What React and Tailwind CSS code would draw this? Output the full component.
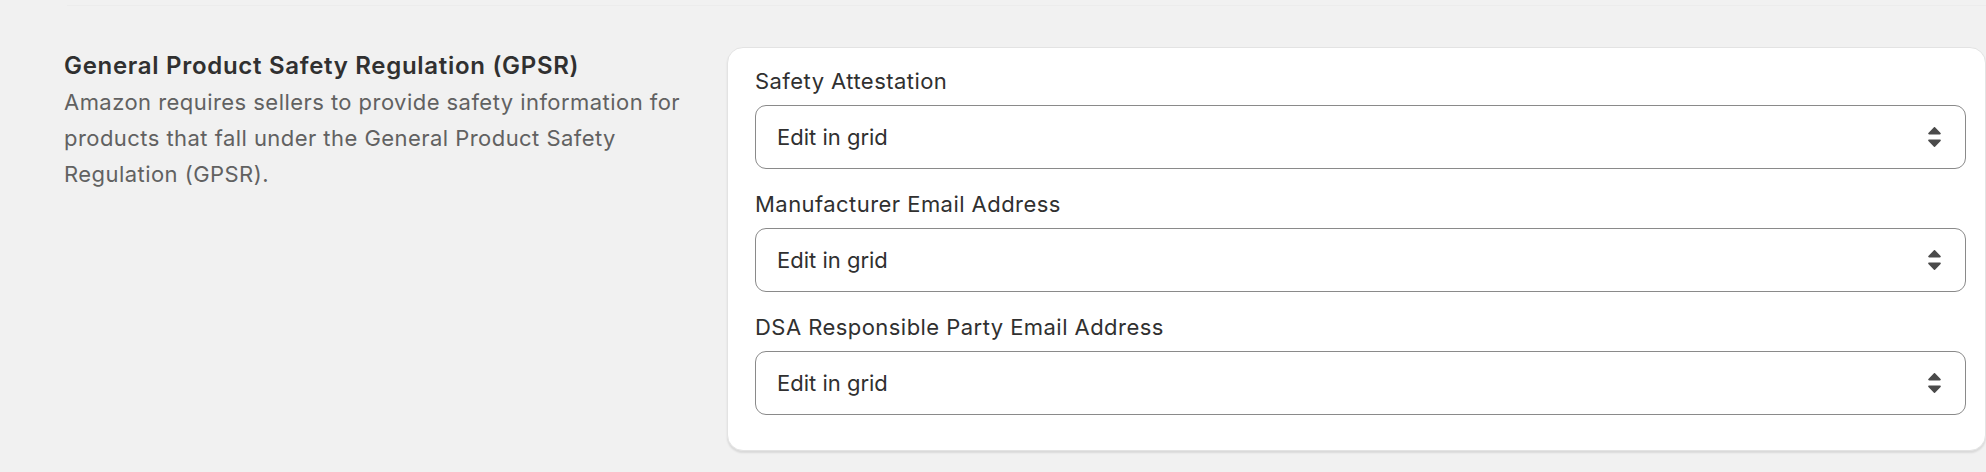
import React from "react";

function SelectArrows() {
  return (
    <svg width="13" height="20" viewBox="0 0 13 20" className="shrink-0">
      <path d="M1.2 7.5h10.6c.9 0 1.3-.9.8-1.5L7.3.5a1 1 0 0 0-1.6 0L.4 6c-.5.6-.1 1.5.8 1.5Z" fill="#4a4a4a" />
      <path d="M1.2 12.5h10.6c.9 0 1.3.9.8 1.5l-5.3 5.5a1 1 0 0 1-1.6 0L.4 14c-.5-.6-.1-1.5.8-1.5Z" fill="#4a4a4a" />
    </svg>
  );
}

function SelectField({ label }) {
  return (
    <div className="flex flex-col">
      <label className="text-[22px] leading-[36px] tracking-[0.45px] text-[#303030] mb-[6px]">{label}</label>
      <div className="h-[64px] flex items-center justify-between rounded-[11px] border border-[#8a8a8a] bg-white pl-[21px] pr-[24px]">
        <span className="text-[22px] leading-[36px] text-[#303030]">Edit in grid</span>
        <SelectArrows />
      </div>
    </div>
  );
}

export default function App() {
  const fields = [
    "Safety Attestation",
    "Manufacturer Email Address",
    "DSA Responsible Party Email Address",
  ];

  return (
    <div className="h-[472px] w-full overflow-hidden bg-[#f1f1f1] font-['Inter','Noto_Sans',sans-serif]">
      {/* faint divider from the section above */}
      <div className="pt-[5px] pl-[67px]">
        <div className="h-px bg-[#ececec]"></div>
      </div>

      <div className="mt-[41px] flex items-start">
        {/* section description */}
        <div className="w-[727px] shrink-0 pl-[64px] pr-[34px] pt-px">
          <h2 className="text-[24px] leading-[36px] tracking-[0.7px] font-semibold text-[#303030]">
            General Product Safety Regulation (GPSR)
          </h2>
          <p className="text-[22px] leading-[36px] tracking-[0.45px] text-[#616161]">
            Amazon requires sellers to provide safety information for products that fall under the General Product Safety Regulation (GPSR).
          </p>
        </div>

        {/* card */}
        <div className="flex-1 rounded-[16px] border border-[#e3e3e3] bg-white pl-[27px] pr-[19px] pt-[15px] pb-[35px] shadow-[0_2px_2px_rgba(0,0,0,0.1)]">
          <div className="flex flex-col gap-[17px]">
            {fields.map((f) => (
              <SelectField key={f} label={f} />
            ))}
          </div>
        </div>
      </div>
    </div>
  );
}
